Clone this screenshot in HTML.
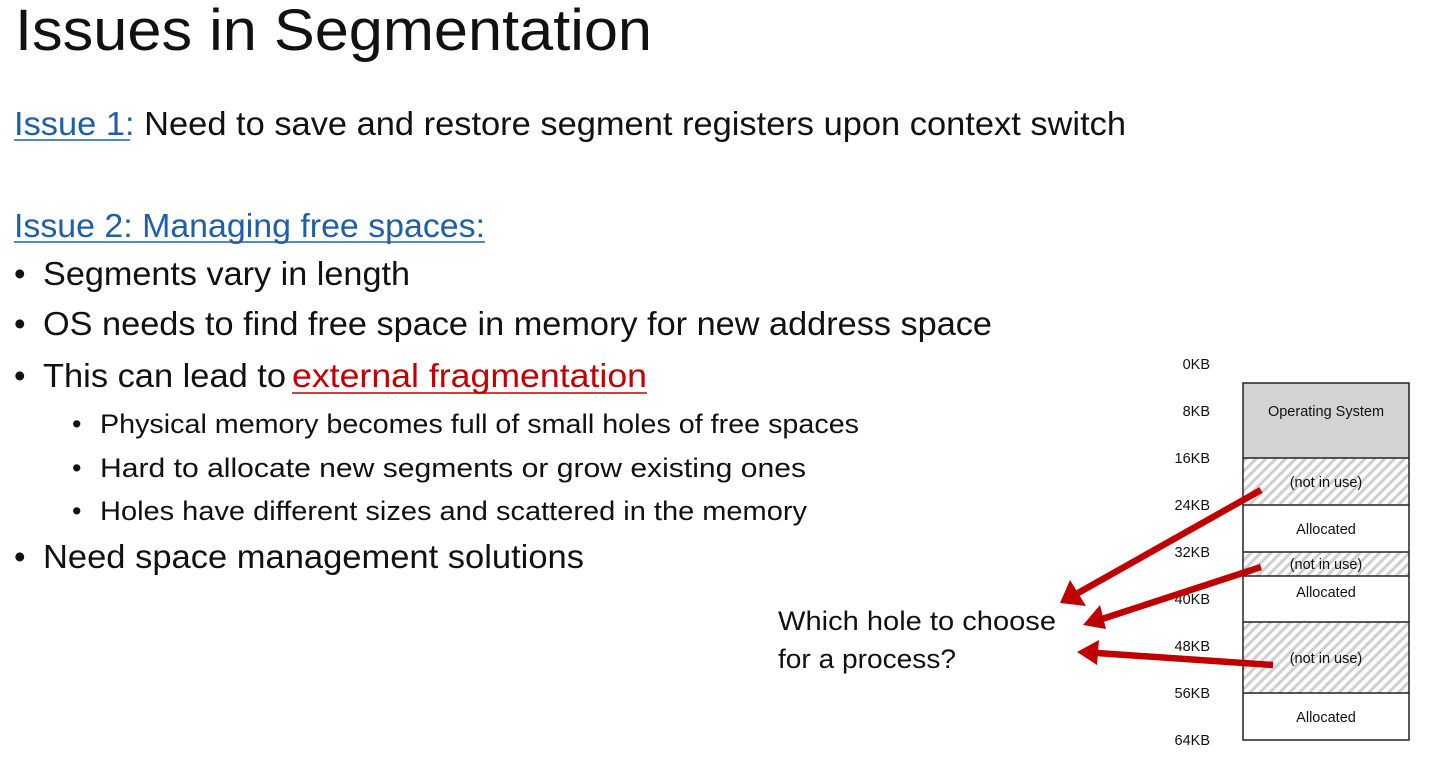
<!DOCTYPE html>
<html><head><meta charset="utf-8"><style>
html,body{margin:0;padding:0;background:#fff;width:1445px;height:763px;overflow:hidden}
svg{display:block}
text{font-family:"Liberation Sans",sans-serif}
</style></head><body>
<svg width="1445" height="763" viewBox="0 0 1445 763" xmlns="http://www.w3.org/2000/svg">
<defs>
<pattern id="h" width="7" height="7" patternUnits="userSpaceOnUse" patternTransform="rotate(45)">
<rect width="7" height="7" fill="#fff"/><rect width="3" height="7" fill="#cfcfcf"/>
</pattern>
</defs>
<text x="15" y="50" font-size="58" fill="#111" textLength="637" lengthAdjust="spacingAndGlyphs">Issues in Segmentation</text>

<text x="14" y="135" font-size="33" fill="#111" textLength="1112" lengthAdjust="spacingAndGlyphs"><tspan fill="#1f5ea8">Issue 1:</tspan> Need to save and restore segment registers upon context switch</text>
<line x1="14" y1="140" x2="130" y2="140" stroke="#1f5ea8" stroke-width="1.5"/>

<text x="14" y="237" font-size="33" fill="#1f5ea8" textLength="471" lengthAdjust="spacingAndGlyphs">Issue 2: Managing free spaces:</text>
<line x1="14" y1="242" x2="485" y2="242" stroke="#1f5ea8" stroke-width="1.5"/>

<g font-size="33" fill="#111">
<text x="14" y="285">•</text>
<text x="43" y="285" textLength="367" lengthAdjust="spacingAndGlyphs">Segments vary in length</text>
<text x="14" y="335">•</text>
<text x="43" y="335" textLength="949" lengthAdjust="spacingAndGlyphs">OS needs to find free space in memory for new address space</text>
<text x="14" y="387">•</text>
<text x="43" y="387" textLength="243" lengthAdjust="spacingAndGlyphs">This can lead to</text>
<text x="292" y="387" fill="#c00000" textLength="355" lengthAdjust="spacingAndGlyphs">external fragmentation</text>
<text x="14" y="568">•</text>
<text x="43" y="568" textLength="541" lengthAdjust="spacingAndGlyphs">Need space management solutions</text>
</g>
<line x1="292" y1="393" x2="647" y2="393" stroke="#c00000" stroke-width="1.5"/>

<g font-size="27" fill="#111">
<text x="72" y="433">•</text>
<text x="100" y="433" textLength="759" lengthAdjust="spacingAndGlyphs">Physical memory becomes full of small holes of free spaces</text>
<text x="72" y="477">•</text>
<text x="100" y="477" textLength="706" lengthAdjust="spacingAndGlyphs">Hard to allocate new segments or grow existing ones</text>
<text x="72" y="520">•</text>
<text x="100" y="520" textLength="707" lengthAdjust="spacingAndGlyphs">Holes have different sizes and scattered in the memory</text>
</g>

<g font-size="27" fill="#111">
<text x="778" y="630" textLength="278" lengthAdjust="spacingAndGlyphs">Which hole to choose</text>
<text x="778" y="668" textLength="178" lengthAdjust="spacingAndGlyphs">for a process?</text>
</g>

<!-- memory diagram -->
<rect x="1243" y="383" width="166" height="75" fill="#d3d3d3"/>
<rect x="1243" y="458" width="166" height="47" fill="url(#h)"/>
<rect x="1243" y="552" width="166" height="24" fill="url(#h)"/>
<rect x="1243" y="622" width="166" height="71" fill="url(#h)"/>
<g stroke="#222" stroke-width="1.5" fill="none">
<rect x="1243" y="383" width="166" height="357"/>
<line x1="1243" y1="458" x2="1409" y2="458"/>
<line x1="1243" y1="505" x2="1409" y2="505"/>
<line x1="1243" y1="552" x2="1409" y2="552"/>
<line x1="1243" y1="576" x2="1409" y2="576"/>
<line x1="1243" y1="622" x2="1409" y2="622"/>
<line x1="1243" y1="693" x2="1409" y2="693"/>
</g>
<g font-size="14.5" fill="#111" text-anchor="end">
<text x="1210" y="369">0KB</text>
<text x="1210" y="416">8KB</text>
<text x="1210" y="463">16KB</text>
<text x="1210" y="510">24KB</text>
<text x="1210" y="557">32KB</text>
<text x="1210" y="604">40KB</text>
<text x="1210" y="651">48KB</text>
<text x="1210" y="698">56KB</text>
<text x="1210" y="745">64KB</text>
</g>
<g font-size="14.5" fill="#111" text-anchor="middle">
<text x="1326" y="416">Operating System</text>
<text x="1326" y="487">(not in use)</text>
<text x="1326" y="534">Allocated</text>
<text x="1326" y="569">(not in use)</text>
<text x="1326" y="597">Allocated</text>
<text x="1326" y="663">(not in use)</text>
<text x="1326" y="722">Allocated</text>
</g>

<!-- arrows -->
<g stroke="#c00000" stroke-width="6.5" fill="none">
<line x1="1261" y1="490" x2="1078" y2="593"/>
<line x1="1261" y1="567" x2="1102" y2="619"/>
<line x1="1273" y1="665" x2="1097" y2="653"/>
</g>
<g fill="#c00000">
<polygon points="1060,603 1070,580 1086,606"/>
<polygon points="1083,625 1100,605 1106,629"/>
<polygon points="1077,652 1099,640 1097,665"/>
</g>
</svg>
</body></html>
